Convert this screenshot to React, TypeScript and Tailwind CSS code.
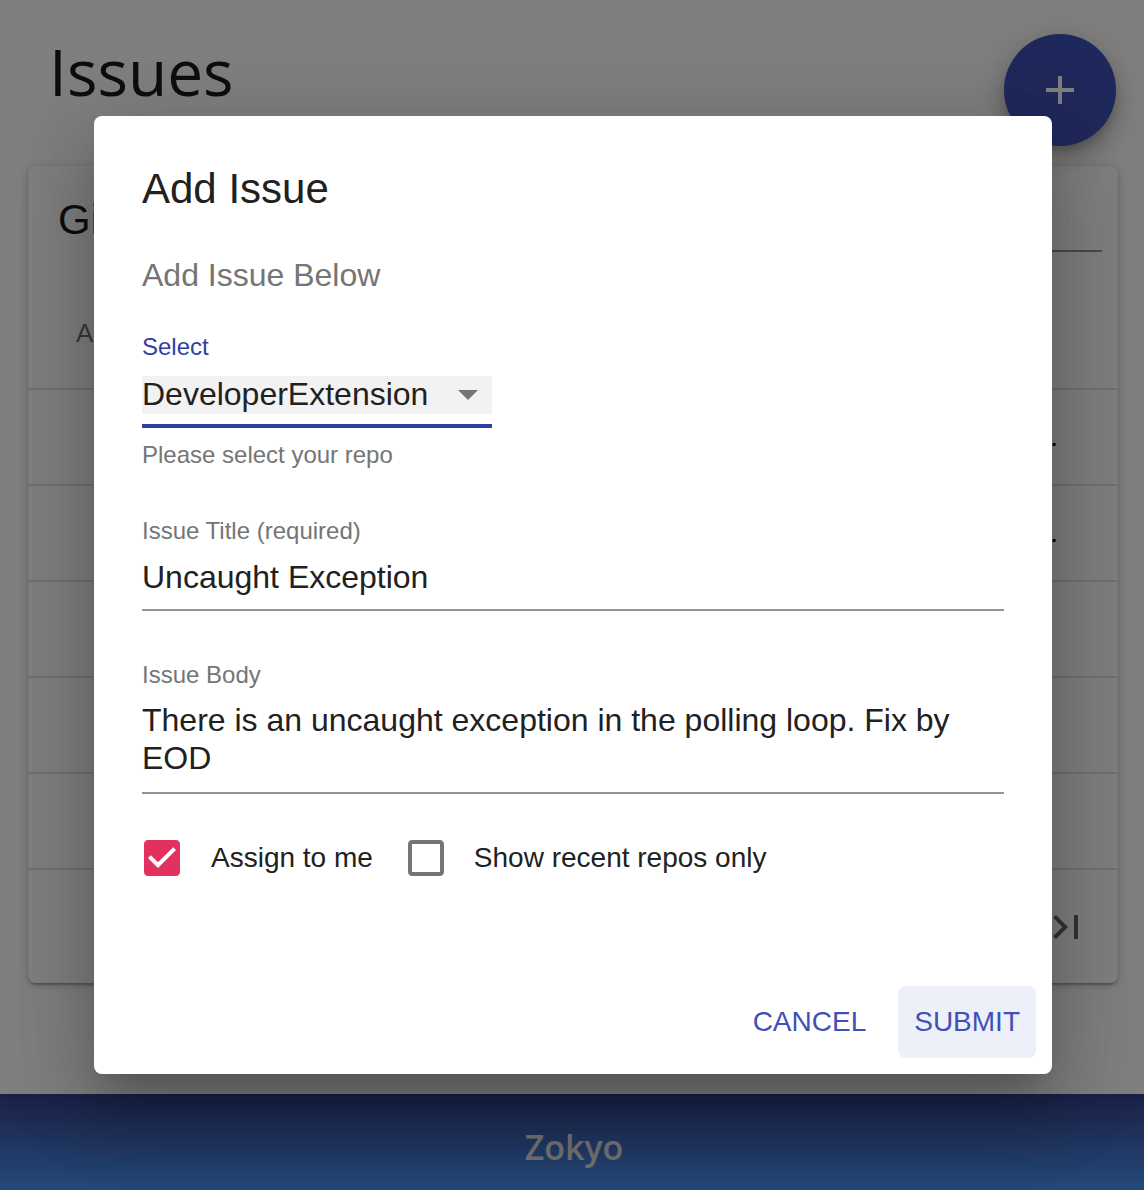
import React from "react";

const rowDots = [true, true, false, false, false];

function CheckedBox() {
  return (
    <svg width="48" height="48" viewBox="0 0 24 24" className="shrink-0">
      <path
        fill="#e3315f"
        d="M19 3H5c-1.11 0-2 .9-2 2v14c0 1.1.89 2 2 2h14c1.11 0 2-.9 2-2V5c0-1.1-.89-2-2-2zm-9 14l-5-5 1.41-1.41L10 14.17l7.59-7.59L19 8l-9 9z"
      />
    </svg>
  );
}

function EmptyBox() {
  return (
    <svg width="48" height="48" viewBox="0 0 24 24" className="shrink-0">
      <path
        fill="#757575"
        d="M19 5v14H5V5h14m0-2H5c-1.1 0-2 .9-2 2v14c0 1.1.9 2 2 2h14c1.1 0 2-.9 2-2V5c0-1.1-.9-2-2-2z"
      />
    </svg>
  );
}

export default function App() {
  return (
    <div className="relative w-[1144px] h-[1190px] overflow-hidden bg-white flex flex-col font-['Liberation_Sans',Arial,sans-serif]">
      {/* Page header */}
      <div className="h-[166px] shrink-0 pl-[49px] pt-[32px]">
        <h1 className="font-['Open_Sans',sans-serif] text-[64px] leading-[80px] text-[#1a1a1a]">
          Issues
        </h1>
      </div>

      {/* FAB */}
      <button className="absolute left-[1004px] top-[34px] w-[112px] h-[112px] rounded-full bg-[#3f51b5] flex items-center justify-center shadow-[0_6px_10px_-2px_rgba(0,0,0,0.2),0_12px_20px_2px_rgba(0,0,0,0.14),0_4px_36px_4px_rgba(0,0,0,0.12)]">
        <svg width="28" height="28" viewBox="0 0 28 28">
          <path d="M12 0h4v28h-4z M0 12h28v4H0z" fill="#ffffff" />
        </svg>
      </button>

      {/* Card */}
      <div className="ml-[28px] w-[1090px] h-[817px] shrink-0 rounded-[8px] bg-white flex flex-col overflow-hidden shadow-[0_2px_2px_0_rgba(0,0,0,0.14),0_6px_2px_-4px_rgba(0,0,0,0.12),0_2px_10px_0_rgba(0,0,0,0.2)]">
        <div className="h-[124px] shrink-0 flex items-start pl-[30px] pr-[16px] pt-[30px]">
          <span className="text-[42px] leading-[48px] text-[#1a1a1a]">GitHub Issues</span>
          <div className="ml-auto w-[420px] h-[56px] border-b-2 border-[#949494]" />
        </div>
        <div className="h-[100px] shrink-0 border-b-2 border-[#e0e0e0] pl-[48px] pt-[29px] text-[26px] leading-[28px] text-[#757575]">
          Actions
        </div>
        {rowDots.map((d, i) => (
          <div
            key={i}
            className="h-[96px] shrink-0 border-b-2 border-[#e0e0e0] flex items-center justify-end pr-[60px] text-[28px] text-black"
          >
            {d ? "Repository name..." : ""}
          </div>
        ))}
        <div className="flex-1 flex items-center justify-end pr-[28px]">
          <svg width="48" height="48" viewBox="0 0 24 24">
            <path
              fill="rgba(0,0,0,0.6)"
              d="M5.59 7.41L10.18 12l-4.59 4.59L7 18l6-6-6-6zM16 6h2v12h-2z"
            />
          </svg>
        </div>
      </div>

      <div className="flex-1" />

      {/* Footer */}
      <footer className="h-[96px] shrink-0 bg-gradient-to-b from-[#34428c] to-[#4894f4] flex items-center justify-center pt-[10px]">
        <span className="ml-[4px] font-['Open_Sans',sans-serif] font-semibold text-[34px] text-[#e0e0e0]">
          Zokyo
        </span>
      </footer>

      {/* Backdrop + dialog */}
      <div className="absolute inset-0 bg-black/50 flex items-center justify-center pl-[2px]">
        <div className="w-[958px] h-[958px] rounded-[8px] bg-white flex flex-col shadow-[0_22px_30px_-14px_rgba(0,0,0,0.2),0_48px_76px_6px_rgba(0,0,0,0.14),0_18px_92px_16px_rgba(0,0,0,0.12)]">
          <div className="px-[48px] pt-[49px] flex flex-col">
            <h2 className="text-[42px] leading-[48px] text-[#212121]">Add Issue</h2>
            <p className="mt-[43px] text-[32px] leading-[38px] text-[#757575]">Add Issue Below</p>

            <label className="mt-[39px] text-[24px] leading-[28px] text-[#303f9f]">Select</label>
            <div className="mt-[15px] w-[350px] h-[38px] bg-[#f2f2f2] flex items-start justify-between">
              <span className="text-[32px] leading-[36px] text-[#212121]">DeveloperExtension</span>
              <svg width="48" height="48" viewBox="0 0 24 24" className="-mt-[6px]">
                <path d="M7 10l5 5 5-5z" fill="#757575" />
              </svg>
            </div>
            <div className="mt-[10px] w-[350px] h-[4px] bg-[#303f9f]" />
            <p className="mt-[13px] text-[24px] leading-[28px] text-[#757575]">Please select your repo</p>

            <label className="mt-[48px] text-[24px] leading-[28px] text-[#757575]">Issue Title (required)</label>
            <div className="mt-[13px] text-[32px] leading-[38px] text-[#212121]">Uncaught Exception</div>
            <div className="mt-[13px] h-[2px] bg-[#949494]" />

            <label className="mt-[50px] text-[24px] leading-[28px] text-[#757575]">Issue Body</label>
            <div className="mt-[12px] text-[32px] leading-[38px] text-[#212121]">
              There is an uncaught exception in the polling loop. Fix by EOD
            </div>
            <div className="mt-[15px] h-[2px] bg-[#949494]" />

            <div className="mt-[40px] -ml-[4px] flex items-center h-[48px] text-[28px] leading-[48px] text-[#212121]">
              <CheckedBox />
              <span className="ml-[25px]">Assign to me</span>
              <span className="ml-[29px] flex">
                <EmptyBox />
              </span>
              <span className="ml-[24px]">Show recent repos only</span>
            </div>
          </div>

          <div className="mt-auto p-[16px] flex items-center justify-end gap-[16px]">
            <button className="h-[72px] min-w-[128px] px-[16px] rounded-[8px] text-[28px] leading-[72px] text-[#3f51b5] uppercase">
              Cancel
            </button>
            <button className="h-[72px] min-w-[128px] px-[16px] rounded-[8px] bg-[#eef0f9] text-[28px] leading-[72px] text-[#3f51b5] uppercase">
              Submit
            </button>
          </div>
        </div>
      </div>
    </div>
  );
}
